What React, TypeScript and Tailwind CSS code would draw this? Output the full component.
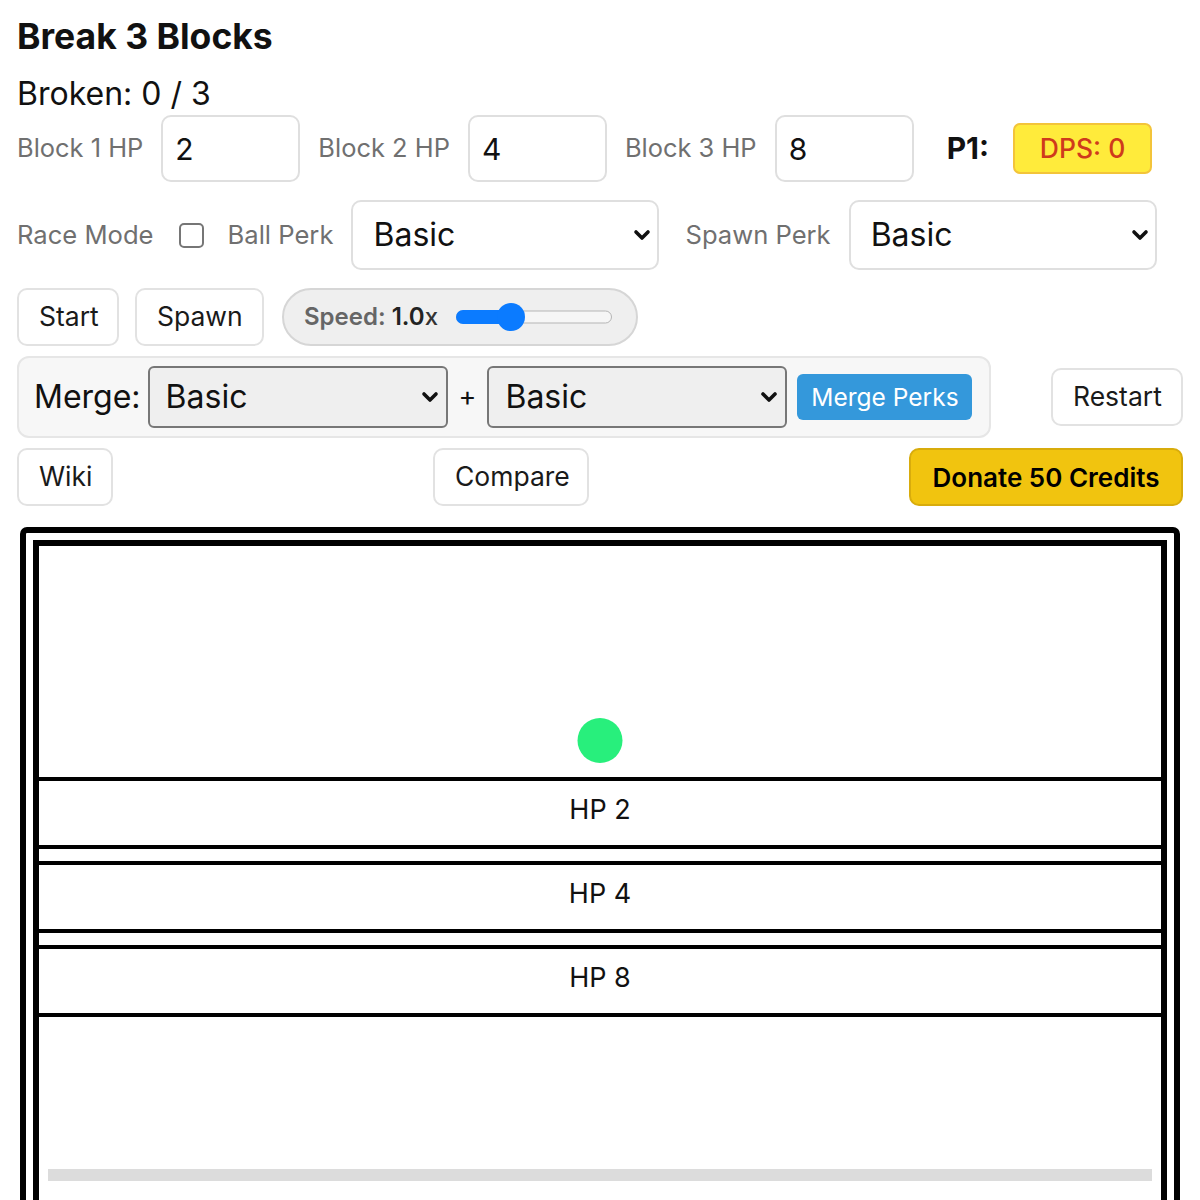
import React from "react";

// Bold chevron used on the custom-styled selects
function Chevron({ className }: { className?: string }) {
  return (
    <svg
      width="18"
      height="12"
      viewBox="0 0 18 12"
      fill="none"
      stroke="currentColor"
      strokeWidth="3.6"
      strokeLinecap="round"
      strokeLinejoin="round"
      className={className}
    >
      <path d="M3 3l6 6 6-6" />
    </svg>
  );
}

function HpField({ label, value }: { label: string; value: string }) {
  return (
    <>
      <label className="text-[25.45px] text-[#707070]">{label}</label>
      <input
        defaultValue={value}
        className="w-[139px] h-[67px] rounded-[10px] border-2 border-[#dfdfdf] bg-white px-[12px] text-[30px] text-[#111] outline-none"
      />
    </>
  );
}

function PerkSelect() {
  return (
    <div className="relative">
      <select className="appearance-none w-[308px] h-[70px] rounded-[10px] border-2 border-[#dfdfdf] bg-white pl-[20px] text-[32px] text-[#111] outline-none">
        <option>Basic</option>
      </select>
      <Chevron className="pointer-events-none absolute right-[8px] top-1/2 -translate-y-1/2 text-[#111]" />
    </div>
  );
}

function MergeSelect() {
  return (
    <div className="relative">
      <select className="appearance-none w-[300px] h-[62px] rounded-[6px] border-2 border-[#777] bg-[#efefef] pl-[16px] text-[32px] text-[#111] outline-none">
        <option>Basic</option>
      </select>
      <Chevron className="pointer-events-none absolute right-[9px] top-1/2 -translate-y-1/2 text-[#111]" />
    </div>
  );
}

function Btn({ children, className = "" }: { children: React.ReactNode; className?: string }) {
  return (
    <button
      type="button"
      className={
        "h-[58px] rounded-[10px] border-2 border-[#e2e2e2] bg-white px-[20px] text-[26.5px] text-[#1a1a1a] " +
        className
      }
    >
      {children}
    </button>
  );
}

function Block({ hp }: { hp: number }) {
  return (
    <div className="h-[72px] border-y-4 border-black pb-[5px] flex items-center justify-center text-[27px] text-[#111]">
      HP {hp}
    </div>
  );
}

export default function App() {
  return (
    <div className="min-h-screen bg-white font-['Inter',sans-serif] text-[#111] px-[17px] pt-[17px] overflow-hidden">
      <h1 className="text-[35.5px] font-bold leading-[40px]">Break 3 Blocks</h1>
      <div className="mt-[19px] text-[32px] leading-[36px]">Broken: 0 / 3</div>

      {/* block HP inputs + player stats */}
      <div className="mt-[3px] flex items-center gap-[18px]">
        <HpField label="Block 1 HP" value="2" />
        <HpField label="Block 2 HP" value="4" />
        <HpField label="Block 3 HP" value="8" />
        <span className="ml-[15px] text-[30px] font-bold">P1:</span>
        <span className="ml-[6px] w-[139px] h-[51px] rounded-[7px] border-2 border-[#f3c43a] bg-[#ffeb3b] flex items-center justify-center text-[26.5px] font-medium text-[#cf3a1c]">
          DPS: 0
        </span>
      </div>

      {/* mode + perks */}
      <div className="mt-[18px] flex items-center gap-[18px]">
        <span className="text-[25.6px] text-[#707070]">Race Mode</span>
        <span className="ml-[7px] mr-[6px] w-[25px] h-[25px] rounded-[5px] border-2 border-[#767676] bg-white" />
        <span className="text-[25.6px] text-[#707070]">Ball Perk</span>
        <PerkSelect />
        <span className="ml-[8px] text-[25.6px] text-[#707070]">Spawn Perk</span>
        <PerkSelect />
      </div>

      {/* controls */}
      <div className="mt-[18px] flex items-center gap-[16px]">
        <Btn className="w-[102px] px-0">Start</Btn>
        <Btn className="w-[129px] px-0">Spawn</Btn>
        <div className="ml-[2px] h-[58px] w-[356px] rounded-full border-2 border-[#d6d6d6] bg-[#efefef] pl-[20px] flex items-center gap-[18px]">
          <span className="text-[24px] font-semibold text-[#666]">
            Speed: <span className="text-[#222]">1.0</span>
            <span className="font-medium text-[#333]">x</span>
          </span>
          <div className="relative w-[156px] h-[28px]">
            <div className="absolute left-0 right-0 top-1/2 -translate-y-1/2 h-[13px] rounded-full border border-[#b5b5b5] bg-[#f6f6f6]" />
            <div className="absolute left-0 top-1/2 -translate-y-1/2 h-[14px] w-[56px] rounded-full bg-[#0b7bff]" />
            <div className="absolute left-[41px] top-0 w-[28px] h-[28px] rounded-full bg-[#0b7bff]" />
          </div>
        </div>
      </div>

      {/* perk merging */}
      <div className="mt-[10px] flex items-center justify-between">
        <div className="h-[82px] w-[974px] rounded-[12px] border-2 border-[#e6e6e6] bg-[#f7f7f7] pl-[15px] flex items-center gap-[8px]">
          <span className="mr-[-1px] text-[32px]">Merge:</span>
          <MergeSelect />
          <span className="mx-[3px] text-[27px]">+</span>
          <MergeSelect />
          <button
            type="button"
            className="ml-[2px] h-[46px] w-[175px] rounded-[6px] bg-[#3498db] text-[24.5px] text-white"
          >
            Merge Perks
          </button>
        </div>
        <Btn className="w-[132px] px-0">Restart</Btn>
      </div>

      <div className="mt-[10px] flex items-center justify-between">
        <Btn className="w-[96px] px-0">Wiki</Btn>
        <Btn className="w-[156px] px-0">Compare</Btn>
        <button
          type="button"
          className="h-[58px] w-[274px] rounded-[10px] border-2 border-[#d8ac0c] bg-[#f1c40f] text-[26px] font-semibold text-black"
        >
          Donate 50 Credits
        </button>
      </div>

      {/* game board */}
      <div className="mx-[3px] mt-[21px] rounded-[7px] border-[6px] border-black p-[7px]">
        <div className="border-[6px] border-black pb-[60px]">
          <div className="relative h-[231px]">
            <div className="absolute left-1/2 top-[172px] w-[45px] h-[45px] -translate-x-1/2 rounded-full bg-[#28ef7c]" />
          </div>
          <div className="flex flex-col gap-[12px]">
            <Block hp={2} />
            <Block hp={4} />
            <Block hp={8} />
          </div>
          <div className="mx-[9px] mt-[152px] h-[12px] bg-[#dcdcdc]" />
        </div>
      </div>
    </div>
  );
}
